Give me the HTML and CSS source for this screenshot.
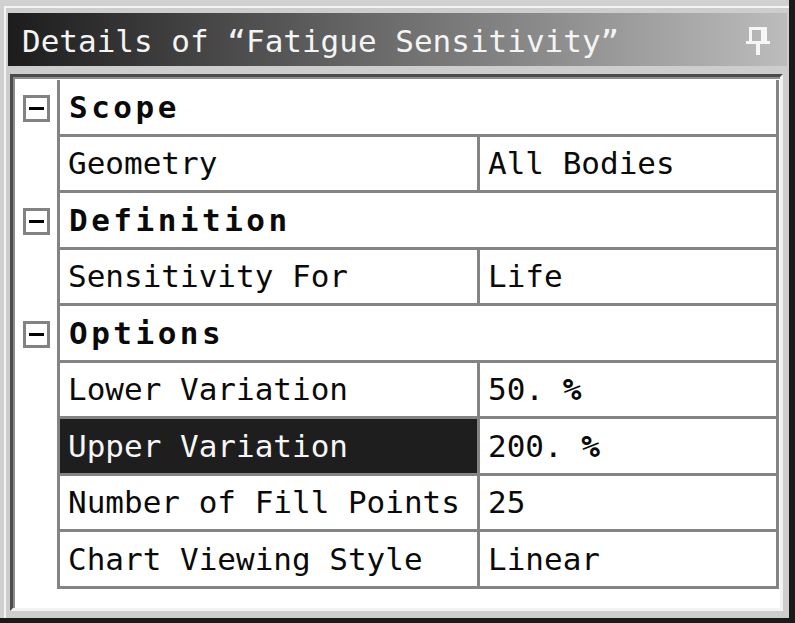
FILE: index.html
```html
<!DOCTYPE html>
<html>
<head>
<meta charset="utf-8">
<link rel="stylesheet" href="styles.css">
</head>
<body>
<div class="window">
  <div class="frame">
    <div class="titlebar">
      <span class="title">Details of “Fatigue Sensitivity”</span>
      <svg class="pin" width="26" height="28" viewBox="0 0 26 28">
        <rect x="4" y="0" width="18" height="3" fill="#f6f6f6"/>
        <rect x="4" y="0" width="3" height="15" fill="#f6f6f6"/>
        <rect x="16" y="0" width="6" height="15" fill="#f6f6f6"/>
        <rect x="1" y="14" width="24" height="3" fill="#f6f6f6"/>
        <rect x="11" y="17" width="4" height="11" fill="#f6f6f6"/>
      </svg>
    </div>
    <div class="panel">
      <div class="row">
        <div class="tree"><span class="minus"></span></div>
        <div class="cell header">Scope</div>
      </div>
      <div class="row">
        <div class="tree"></div>
        <div class="cell label">Geometry</div>
        <div class="cell value">All Bodies</div>
      </div>
      <div class="row">
        <div class="tree"><span class="minus"></span></div>
        <div class="cell header">Definition</div>
      </div>
      <div class="row">
        <div class="tree"></div>
        <div class="cell label">Sensitivity For</div>
        <div class="cell value">Life</div>
      </div>
      <div class="row">
        <div class="tree"><span class="minus"></span></div>
        <div class="cell header">Options</div>
      </div>
      <div class="row">
        <div class="tree"></div>
        <div class="cell label">Lower Variation</div>
        <div class="cell value">50. <b class="pct">%</b></div>
      </div>
      <div class="row">
        <div class="tree"></div>
        <div class="cell label selected">Upper Variation</div>
        <div class="cell value">200. <b class="pct">%</b></div>
      </div>
      <div class="row">
        <div class="tree"></div>
        <div class="cell label">Number of Fill Points</div>
        <div class="cell value">25</div>
      </div>
      <div class="row">
        <div class="tree"></div>
        <div class="cell label">Chart Viewing Style</div>
        <div class="cell value">Linear</div>
      </div>
    </div>
  </div>
</div>
</body>
</html>
```

FILE: styles.css
```css
html, body {
  margin: 0;
  padding: 0;
  background: #1a1a1a;
}

.window {
  box-sizing: border-box;
  width: 795px;
  height: 623px;
  background: #d0d0d0;
  border-right: 6px solid #1a1a1a;
  border-bottom: 5px solid #1a1a1a;
  padding: 6px 0 0 4px;
}

.frame {
  height: 612px;
  width: 785px;
  box-sizing: border-box;
  border-top: 2px solid #f4f4f4;
  border-left: 2px solid #f4f4f4;
  padding: 5px 0 7px 2px;
  display: flex;
  flex-direction: column;
  background: #cdcdcd;
}

.titlebar {
  height: 53px;
  flex: none;
  width: 779px;
  background: linear-gradient(to right, #1c1c1c 0%, #6e6e6e 50%, #bcbcbc 100%);
  display: flex;
  align-items: center;
  justify-content: space-between;
  padding: 0 16px 0 14px;
  box-sizing: border-box;
}

.title {
  font-family: "DejaVu Sans Mono", monospace;
  font-size: 31px;
  color: #f4f4f4;
  white-space: pre;
  margin-top: 3px;
}

.pin {
  display: block;
  margin-top: 3px;
}

.panel {
  margin: 8px 0 0 2px;
  width: 773px;
  flex: 1;
  box-sizing: border-box;
  background: #ffffff;
  border-top: 3px solid #4c4c4c;
  border-left: 3px solid #4c4c4c;
  border-right: 3px solid #f2f2f2;
  border-bottom: 3px solid #f2f2f2;
  box-shadow: inset 2px 2px 0 #8c8c8c;
  padding: 3px 0 0 2px;
}

.row {
  display: grid;
  grid-template-columns: 42px 420px 302px;
  height: 56.5px;
}

.tree {
  display: flex;
  align-items: center;
  justify-content: center;
  padding-left: 1px;
}

.minus {
  display: block;
  width: 27px;
  height: 27px;
  box-sizing: border-box;
  border: 3px solid #828282;
  background: #ffffff;
  position: relative;
}

.minus::after {
  content: "";
  position: absolute;
  left: 3px;
  right: 3px;
  top: 9px;
  height: 3px;
  background: #000000;
}

.cell {
  box-sizing: border-box;
  border-left: 3px solid #848484;
  border-bottom: 3px solid #848484;
  display: flex;
  align-items: center;
  font-family: "DejaVu Sans Mono", monospace;
  font-size: 31px;
  color: #0a0a0a;
  white-space: pre;
  padding-left: 8px;
}

.header {
  grid-column: 2 / 4;
  border-right: 3px solid #848484;
  font-weight: bold;
  letter-spacing: 3.5px;
  padding-left: 9px;
}

.value {
  border-right: 3px solid #848484;
  padding-left: 8px;
}

.selected {
  background: #1e1e1e;
  color: #f6f6f6;
}

.pct {
  font-weight: bold;
}
```
